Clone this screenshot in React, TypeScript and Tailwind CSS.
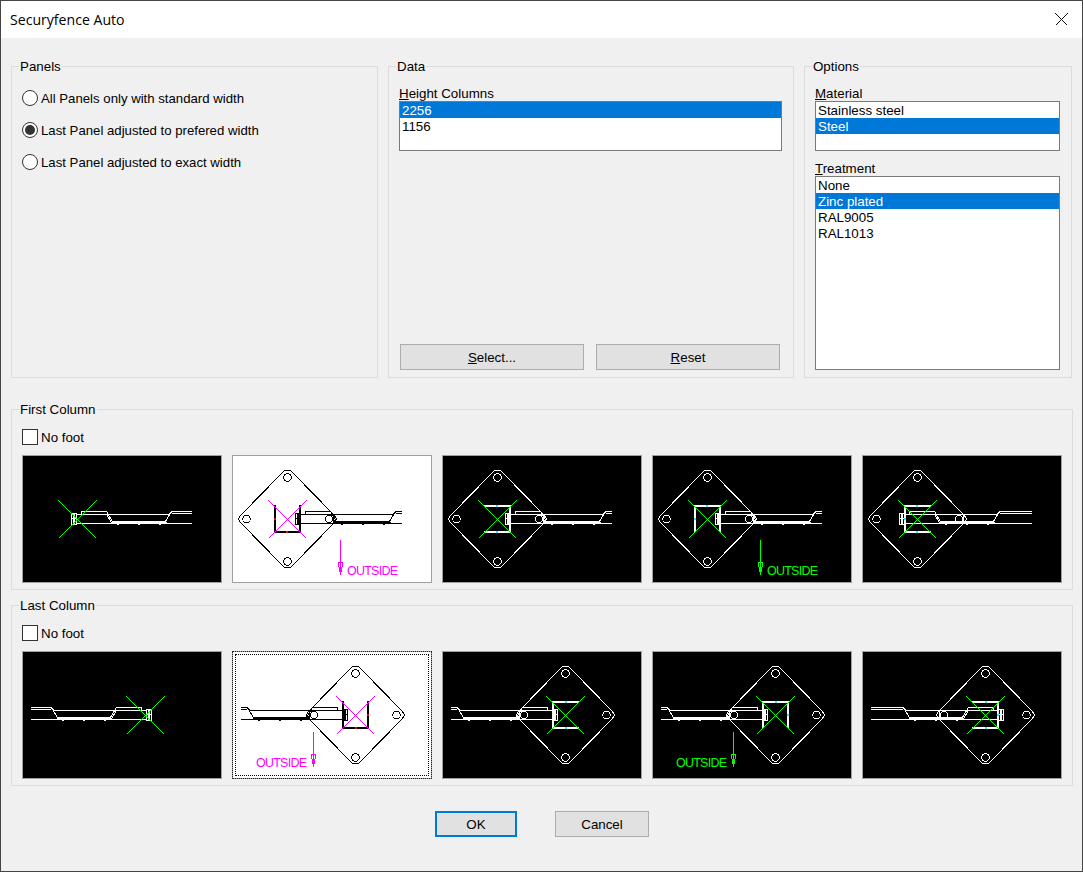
import React from "react";

type Edge = "L" | "T" | "R" | "B";
type Spec = {
  off: number;
  diamond: boolean;
  u?: Edge[];
  sel?: boolean;
  outside?: boolean;
};

const specs: Spec[] = [
  { off: 49, diamond: false },
  { off: 63, diamond: true, u: ["L", "B", "R"], sel: true, outside: true },
  { off: 63, diamond: true, u: ["T", "R", "B"] },
  { off: 63, diamond: true, u: ["L", "T", "R"], outside: true },
  { off: 37, diamond: true, u: ["L", "T", "B"] },
];

function Profile({ off, fg }: { off: number; fg: string }) {
  return (
    <svg x={0} y={0} width={170} height={128}>
      <g transform={`translate(${off} 0)`} fill="none" stroke={fg}>
        <rect x={0.5} y={58.5} width={5} height={11} />
        <path d="M0.5 63.5H5.5" />
        <path d="M3 58V70" strokeWidth={2} />
        <path d="M6 59.5H97.5L101.5 56.5H240" />
        <path d="M101 58.5H240" />
        <path d="M6 68.5H240" />
        <path d="M10.5 59V56.5H35.5L41.5 66.5H94.5L100.5 56.5" />
        <path d="M35.5 59.5L40.5 67.5H95.5" />
        <path d="M46 69.5H48M67 69.5H69M88 69.5H90" />
      </g>
    </svg>
  );
}

function Drawing({ spec, mirror, focus }: { spec: Spec; mirror: boolean; focus: boolean }) {
  const sel = !!spec.sel;
  const fg = sel ? "#000000" : "#ffffff";
  const cross = sel ? "#ff00ff" : "#00ff00";
  const tick = sel ? "#ff0000" : "#00ffff";
  const mark = sel ? "#ff00ff" : "#00ff00";
  const u = spec.u ?? [];
  const a = 36.5;
  const b = 74.5;
  return (
    <svg
      viewBox="1 1 198 126"
      width={198}
      height={126}
      shapeRendering="crispEdges"
      className={
        focus
          ? "block outline outline-1 outline-dotted outline-black outline-offset-[-3px]"
          : "block"
      }
      style={{ background: sel ? "#ffffff" : "#000000" }}
    >
      <g transform={mirror ? "translate(179 0) scale(-1 1)" : undefined}>
        <Profile off={spec.off} fg={fg} />
        {spec.diamond && (
          <g fill="none" stroke={fg}>
            <path d="M52.5 15.5H58.5L60.5 17.5L102.5 60.5L104.5 64L102.5 67.5L60.5 110.5L58.5 112.5H52.5L50.5 110.5L8.5 67.5L6.5 64L8.5 60.5L50.5 17.5Z" />
            <path d="M100.5 59Q103 64 100.5 69" />
            <circle cx={55.5} cy={22.5} r={3.75} />
            <circle cx={14.5} cy={64} r={3.75} />
            <circle cx={55.5} cy={106.5} r={3.75} />
            <circle cx={97} cy={64} r={3.75} />
          </g>
        )}
        {u.length > 0 && (
          <g stroke={fg} strokeWidth={2} fill="none">
            {u.includes("L") && <path d="M43 50V77" />}
            {u.includes("R") && <path d="M68 50V77" />}
            {u.includes("T") && <path d="M42 51H69" />}
            {u.includes("B") && <path d="M42 77H69" />}
            <g stroke={tick}>
              {u.includes("L") && <path d="M43 63V65" />}
              {u.includes("T") && <path d="M55 50V52" />}
              {u.includes("B") && <path d="M55 76V78" />}
            </g>
          </g>
        )}
        <path
          d={`M${a} 45.5L${b} 83.5M${b} 45.5L${a} 83.5`}
          stroke={cross}
          fill="none"
        />
      </g>
      {spec.outside && (
        <g>
          <path d={mirror ? "M81.5 81V116" : "M108.5 85V120"} stroke={mark} fill="none" />
          <path
            d={mirror ? "M79.5 103.5H83.5L82.5 112.5H80.5Z" : "M106.5 107.5H110.5L109.5 116.5H107.5Z"}
            stroke={mark}
            fill="none"
          />
          <path d={mirror ? "M81.5 108V113" : "M108.5 112V117"} stroke={mark} strokeWidth={2} />
          <text
            x={mirror ? 24 : 115}
            y={mirror ? 116 : 120}
            fill={mark}
            fontSize={12.5}
            textLength={51}
            lengthAdjust="spacing"
            fontFamily="Liberation Sans"
            shapeRendering="auto"
          >
            OUTSIDE
          </text>
        </g>
      )}
    </svg>
  );
}

function Thumb({ spec, mirror, focus }: { spec: Spec; mirror: boolean; focus: boolean }) {
  return (
    <div
      className={
        focus
          ? "w-[200px] h-[128px] border border-dotted border-[#222222] bg-[#a0a0a0]"
          : "w-[200px] h-[128px] border border-[#a0a0a0]"
      }
    >
      <Drawing spec={spec} mirror={mirror} focus={focus} />
    </div>
  );
}

function Group({
  title,
  className,
  children,
}: {
  title: string;
  className: string;
  children: React.ReactNode;
}) {
  return (
    <fieldset className={`border border-[#dcdcdc] min-w-0 m-0 p-0 ${className}`}>
      <legend className="ml-[7px] px-[1px] h-[16px] leading-[18px]">{title}</legend>
      {children}
    </fieldset>
  );
}

function Radio({ label, on }: { label: string; on?: boolean }) {
  return (
    <div className="flex items-center h-[16px]">
      <span className="w-[16px] h-[16px] rounded-full border border-[#333333] bg-white flex items-center justify-center">
        {on && <span className="w-[10px] h-[10px] rounded-full bg-[#333333]" />}
      </span>
      <span className="ml-[3px] pt-[2px] leading-[16px] text-[13.2px]">{label}</span>
    </div>
  );
}

function ListBox({
  items,
  selected,
  className,
}: {
  items: string[];
  selected: number;
  className: string;
}) {
  return (
    <div className={`border border-[#7a7a7a] bg-white ${className}`}>
      {items.map((t, i) => (
        <div
          key={t}
          className={
            i === selected
              ? "h-[16px] leading-[18px] px-[2px] bg-[#0078d7] text-white"
              : "h-[16px] leading-[18px] px-[2px]"
          }
        >
          {t}
        </div>
      ))}
    </div>
  );
}

function Btn({ className, children }: { className: string; children: React.ReactNode }) {
  return (
    <div className={`h-[26px] pt-[2px] bg-[#e1e1e1] flex items-center justify-center ${className}`}>
      {children}
    </div>
  );
}

function ColumnGroup({
  title,
  mirror,
  className,
}: {
  title: string;
  mirror: boolean;
  className: string;
}) {
  return (
    <Group title={title} className={`w-[1062px] ${className}`}>
      <div className="pl-[10px] pb-[6px] pt-[12px]">
        <div className="flex items-center h-[16px]">
          <span className="w-[16px] h-[16px] border border-[#333333] bg-white" />
          <span className="ml-[3px] pt-[2px]">No foot</span>
        </div>
        <div className="flex gap-[10px] mt-[10px]">
          {specs.map((s, i) => (
            <Thumb key={i} spec={s} mirror={mirror} focus={mirror && i === 1} />
          ))}
        </div>
      </div>
    </Group>
  );
}

export default function App() {
  return (
    <div className="w-[1083px] h-[872px] box-border border border-[#444444] bg-[#f0f0f0] text-black text-[13.33px] font-['Liberation_Sans',sans-serif] overflow-hidden">
      <div className="h-[37px] bg-white flex items-center justify-between pl-[9px] pr-[14px]">
        <span className="text-[14.1px] font-['Open_Sans',sans-serif]">Securyfence Auto</span>
        <svg width="13" height="13" viewBox="0 0 13 13" shapeRendering="crispEdges">
          <path d="M0.5 0.5L12.5 12.5M12.5 0.5L0.5 12.5" stroke="#111111" fill="none" />
        </svg>
      </div>

      <div className="pl-[10px] pt-[20px]">
        <div className="flex gap-[10px] h-[320px]">
          <Group title="Panels" className="w-[367px]">
            <div className="pl-[10px] pt-[16px] flex flex-col gap-[16px]">
              <Radio label="All Panels only with standard width" />
              <Radio label="Last Panel adjusted to prefered width" on />
              <Radio label="Last Panel adjusted to exact width" />
            </div>
          </Group>

          <Group title="Data" className="w-[406px]">
            <div className="pl-[10px] pt-[12px]">
              <div className="h-[15px] leading-[15px]">
                <span className="underline">H</span>eight Columns
              </div>
              <ListBox items={["2256", "1156"]} selected={0} className="w-[383px] h-[50px]" />
              <div className="flex gap-[12px] pl-[1px] mt-[193px]">
                <Btn className="w-[184px] border border-[#adadad]">
                  <span>
                    <span className="underline">S</span>elect...
                  </span>
                </Btn>
                <Btn className="w-[184px] border border-[#adadad]">
                  <span>
                    <span className="underline">R</span>eset
                  </span>
                </Btn>
              </div>
            </div>
          </Group>

          <Group title="Options" className="w-[268px]">
            <div className="pl-[10px] pt-[12px]">
              <div className="h-[15px] leading-[15px]">
                <span className="underline">M</span>aterial
              </div>
              <ListBox
                items={["Stainless steel", "Steel"]}
                selected={1}
                className="w-[245px] h-[50px]"
              />
              <div className="h-[15px] leading-[15px] mt-[10px]">
                <span className="underline">T</span>reatment
              </div>
              <ListBox
                items={["None", "Zinc plated", "RAL9005", "RAL1013"]}
                selected={1}
                className="w-[245px] h-[194px]"
              />
            </div>
          </Group>
        </div>

        <ColumnGroup title="First Column" mirror={false} className="mt-[23px]" />
        <ColumnGroup title="Last Column" mirror className="mt-[7px]" />

        <div className="flex gap-[38px] pl-[424px] mt-[25px]">
          <Btn className="w-[82px] border-2 border-[#0078d7]">OK</Btn>
          <Btn className="w-[94px] border border-[#adadad]">Cancel</Btn>
        </div>
      </div>
    </div>
  );
}
